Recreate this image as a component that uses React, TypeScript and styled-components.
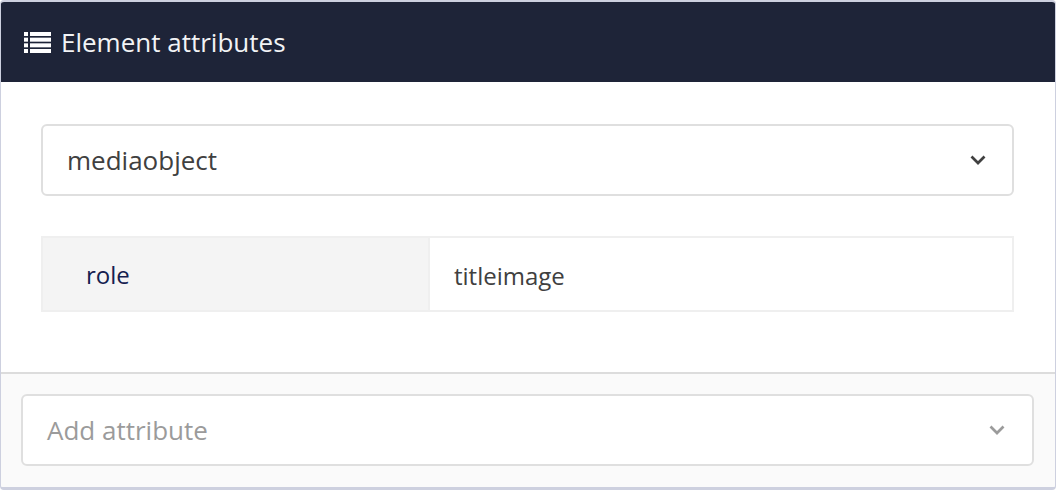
import styled, { createGlobalStyle } from 'styled-components'

const GlobalStyle = createGlobalStyle`
  html, body {
    margin: 0;
    padding: 0;
    background: #fff;
  }
  * {
    box-sizing: border-box;
  }
`

function ListIcon() {
  return (
    <svg width="27" height="21" viewBox="0 0 27 21" fill="#fff">
      {[0, 5.67, 11.33, 17].map((y) => (
        <g key={y}>
          <rect x="0" y={y} width="4" height="4" />
          <rect x="6" y={y} width="21" height="4" />
        </g>
      ))}
    </svg>
  )
}

function Chevron() {
  return (
    <svg width="16" height="10" viewBox="0 0 16 10" fill="none">
      <path d="M1.5 1.5 L8 8 L14.5 1.5" stroke="currentColor" strokeWidth="2.7" />
    </svg>
  )
}

export default function App() {
  return (
    <>
      <GlobalStyle />
      <Panel>
        <Header>
          <ListIcon />
          <Title>Element attributes</Title>
        </Header>
        <Body>
          <Select>
            mediaobject
            <Chevron />
          </Select>
          <AttributeRow>
            <AttributeName>role</AttributeName>
            <AttributeValue>titleimage</AttributeValue>
          </AttributeRow>
        </Body>
        <Footer>
          <Select $placeholder>
            Add attribute
            <Chevron />
          </Select>
        </Footer>
      </Panel>
    </>
  )
}

const Panel = styled.div`
  width: 1056px;
  height: 490px;
  display: flex;
  flex-direction: column;
  border: 1px solid #cdd0df;
  border-top-width: 2px;
  border-bottom-width: 3px;
  border-radius: 4px;
  overflow: hidden;
  font-family: 'Open Sans', sans-serif;
  font-size: 26px;
  color: #404040;
`

const Header = styled.div`
  height: 80px;
  flex: none;
  display: flex;
  align-items: center;
  gap: 10px;
  padding-left: 23px;
  background: #1e2438;
  color: #f2f3f5;
`

const Title = styled.span`
  font-size: 26px;
`

const Body = styled.div`
  flex: 1;
  padding: 42px 41px 0 40px;
  background: #fff;
`

const Select = styled.div<{ $placeholder?: boolean }>`
  height: 72px;
  display: flex;
  align-items: center;
  justify-content: space-between;
  padding: 0 ${({ $placeholder }) => ($placeholder ? '27px' : '26px')} 0 24px;
  background: #fff;
  border: 2px solid #dfdfdf;
  border-radius: 6px;
  color: ${({ $placeholder }) => ($placeholder ? '#9b9b9b' : '#404040')};
`

const AttributeRow = styled.div`
  display: flex;
  height: 76px;
  margin-top: 40px;
  border: 2px solid #efefef;
`

const AttributeName = styled.div`
  width: 387px;
  display: flex;
  align-items: center;
  padding-left: 43px;
  background: #f4f4f4;
  border-right: 2px solid #efefef;
  color: #14204f;
  font-size: 24px;
`

const AttributeValue = styled.div`
  flex: 1;
  display: flex;
  align-items: center;
  padding: 2px 0 0 24px;
  font-size: 24px;
`

const Footer = styled.div`
  flex: none;
  height: 115px;
  padding: 20px 21px 0 20px;
  background: #fafafa;
  border-top: 2px solid #dcdcdc;
`
